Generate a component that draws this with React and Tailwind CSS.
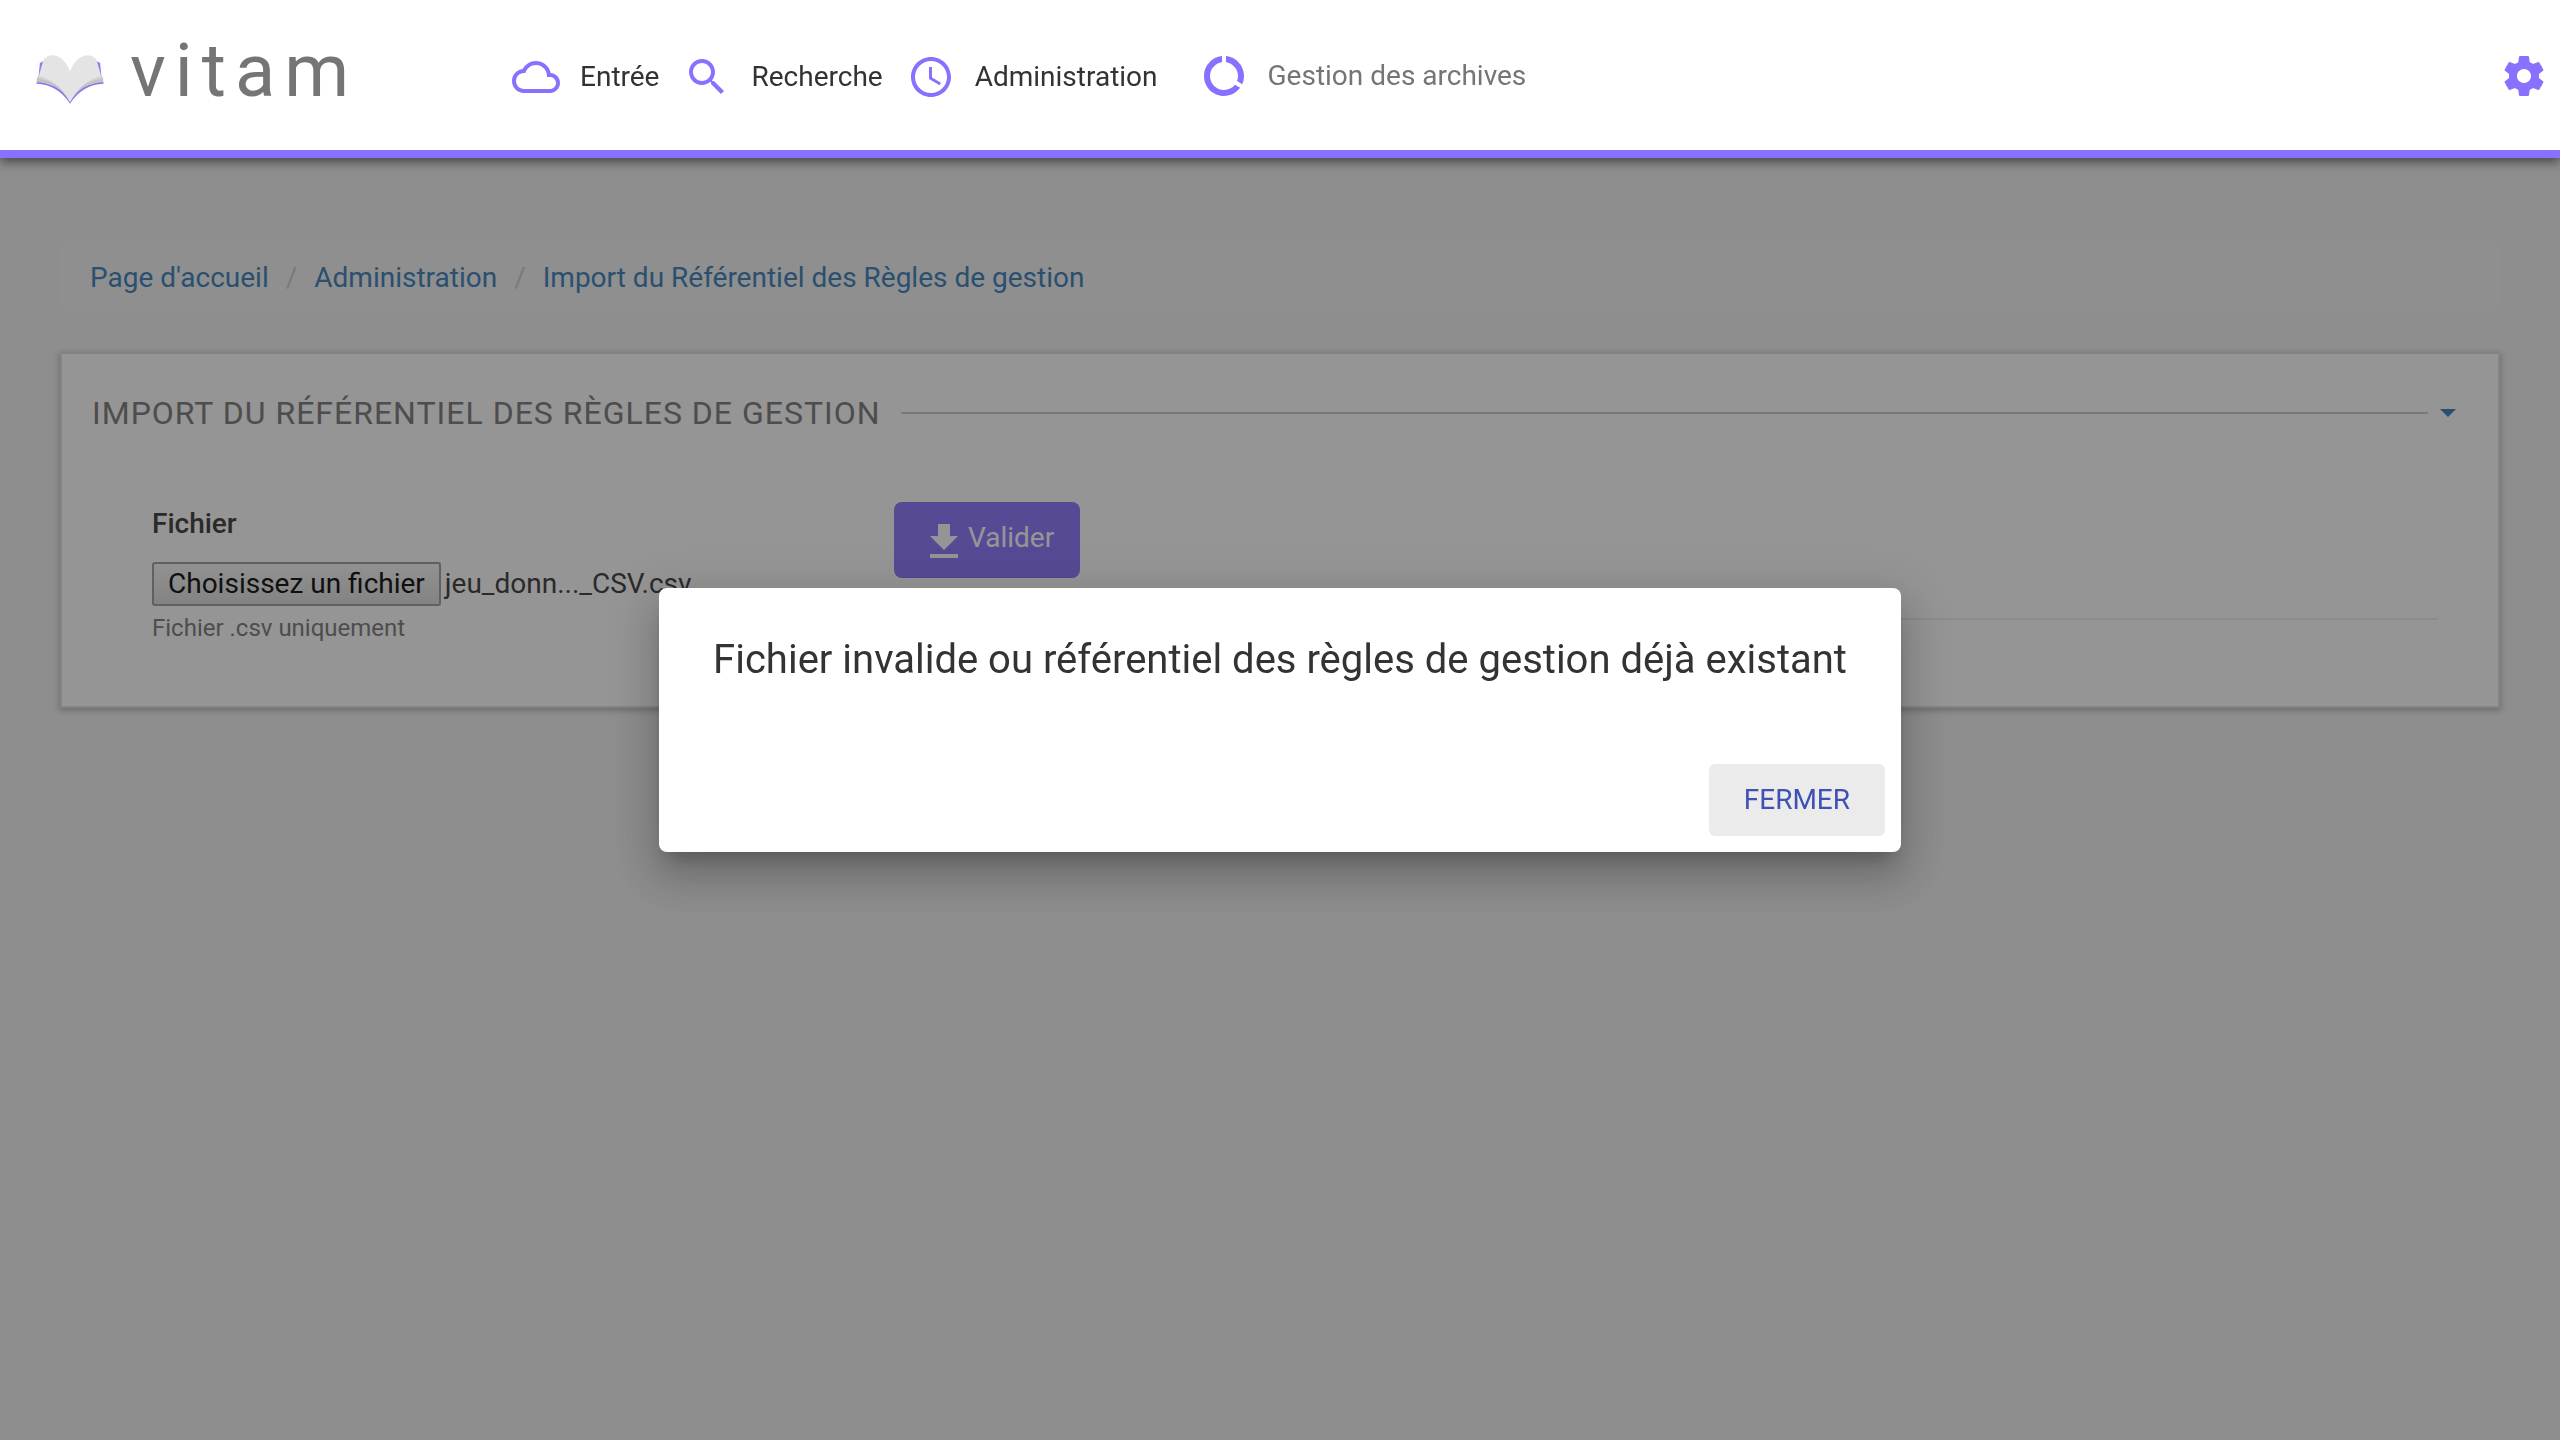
import { useRef } from "react";

function Icon({ d, className }) {
  return (
    <svg viewBox="0 0 24 24" fill="currentColor" aria-hidden="true" className={className}>
      <path d={d} />
    </svg>
  );
}

const CLOUD =
  "M19.35 10.04C18.67 6.59 15.64 4 12 4 9.11 4 6.6 5.64 5.35 8.04 2.34 8.36 0 10.91 0 14c0 3.31 2.69 6 6 6h13c2.76 0 5-2.24 5-5 0-2.64-2.05-4.78-4.65-4.96zM19 18H6c-2.21 0-4-1.79-4-4s1.79-4 4-4h.71C7.37 7.69 9.48 6 12 6c3.04 0 5.5 2.46 5.5 5.5v.5H19c1.66 0 3 1.34 3 3s-1.34 3-3 3z";
const SEARCH =
  "M15.5 14h-.79l-.28-.27C15.41 12.59 16 11.11 16 9.5 16 5.91 13.09 3 9.5 3S3 5.91 3 9.5 5.91 16 9.5 16c1.61 0 3.09-.59 4.23-1.57l.27.28v.79l5 4.99L20.49 19l-4.99-5zm-6 0C7.01 14 5 11.99 5 9.5S7.01 5 9.5 5 14 7.01 14 9.5 11.99 14 9.5 14z";
const CLOCK =
  "M11.99 2C6.47 2 2 6.48 2 12s4.47 10 9.99 10C17.52 22 22 17.52 22 12S17.52 2 11.99 2zM12 20c-4.42 0-8-3.58-8-8s3.58-8 8-8 8 3.58 8 8-3.58 8-8 8zM12.5 7H11v6l5.25 3.15.75-1.23-4.5-2.67z";
const USAGE =
  "M13 2.05v3.03c3.39.49 6 3.39 6 6.92 0 .9-.18 1.75-.48 2.54l2.6 1.53c.56-1.24.88-2.62.88-4.07 0-5.18-3.95-9.45-9-9.95zM12 19c-3.87 0-7-3.13-7-7 0-3.53 2.61-6.43 6-6.92V2.05c-5.06.5-9 4.76-9 9.95 0 5.52 4.47 10 9.99 10 3.31 0 6.24-1.61 8.06-4.09l-2.6-1.53C16.17 17.98 14.21 19 12 19z";
const GEAR =
  "M19.43 12.98c.04-.32.07-.64.07-.98s-.03-.66-.07-.98l2.11-1.65c.19-.15.24-.42.12-.64l-2-3.46c-.12-.22-.39-.3-.61-.22l-2.49 1c-.52-.4-1.08-.73-1.69-.98l-.38-2.65C14.46 2.18 14.25 2 14 2h-4c-.25 0-.46.18-.49.42l-.38 2.65c-.61.25-1.17.59-1.69.98l-2.49-1c-.23-.09-.49 0-.61.22l-2 3.46c-.13.22-.07.49.12.64l2.11 1.65c-.04.32-.07.65-.07.98s.03.66.07.98l-2.11 1.65c-.19.15-.24.42-.12.64l2 3.46c.12.22.39.3.61.22l2.49-1c.52.4 1.08.73 1.69.98l.38 2.65c.03.24.24.42.49.42h4c.25 0 .46-.18.49-.42l.38-2.65c.61-.25 1.17-.59 1.69-.98l2.49 1c.23.09.49 0 .61-.22l2-3.46c.12-.22.07-.49-.12-.64l-2.11-1.65zM12 15.5c-1.93 0-3.5-1.57-3.5-3.5s1.57-3.5 3.5-3.5 3.5 1.57 3.5 3.5-1.57 3.5-3.5 3.5z";
const DOWNLOAD = "M19 9h-4V3H9v6H5l7 7 7-7zM5 18v2h14v-2H5z";

function BookLogo() {
  return (
    <svg viewBox="0 0 204 148" aria-hidden="true" className="h-[49px] w-[68px]">
      <path d="M11 24 22 18 14 66 7 64zM193 24 182 18 190 66 197 64z" fill="#8f7cf0" />
      <path d="M3 76Q0 82 1 87Q65 90 102 147Q139 90 203 87Q204 82 201 76L102 110z" fill="#8a74fa" />
      <path d="M4 66Q0 74 2 82Q68 84 102 141Q136 84 202 82Q204 74 200 66L102 90z" fill="#c2c2c2" />
      <path d="M6 62Q4 66 4 70Q72 82 102 136Q132 82 200 70Q200 66 198 62L102 84z" fill="#d3d3d3" />
      <path
        d="M8 63Q16 34 22 14Q34 0 52 1Q86 6 102 50Q118 6 152 1Q170 0 182 14Q188 34 196 63Q146 78 120 114Q110 128 102 143Q94 128 84 114Q58 78 8 63z"
        fill="#e4e4e4"
      />
    </svg>
  );
}

const NAV = [
  { label: "Entrée", icon: CLOUD },
  { label: "Recherche", icon: SEARCH },
  { label: "Administration", icon: CLOCK },
];

const CRUMBS = ["Page d'accueil", "Administration", "Import du Référentiel des Règles de gestion"];

function Header() {
  return (
    <header className="relative z-20 flex h-[158px] items-center border-b-8 border-[#8970ff] bg-white shadow-[0_4px_10px_rgba(0,0,0,0.5)]">
      <a href="#accueil" className="flex w-1/5 items-center gap-[26px] pl-9">
        <span className="pt-2">
          <BookLogo />
        </span>
        <span className="pb-2 text-[74px] leading-[88px] tracking-[9px] text-[#757575]">vitam</span>
      </a>
      <nav className="flex items-center gap-6 pt-1">
        {NAV.map((item) => (
          <a key={item.label} href="#menu" className="flex items-center gap-5">
            <Icon d={item.icon} className="size-12 text-[#8970ff]" />
            {item.label}
          </a>
        ))}
        <a href="#archives" className="ml-[18px] flex items-center gap-5 pb-[2px] text-[#757575]">
          <Icon d={USAGE} className="size-12 text-[#8970ff]" />
          Gestion des archives
        </a>
      </nav>
      <button type="button" aria-label="Paramètres" className="mr-3 ml-auto pt-[2px] text-[#8970ff]">
        <Icon d={GEAR} className="size-12" />
      </button>
    </header>
  );
}

function Breadcrumb() {
  return (
    <nav aria-label="Fil d'Ariane" className="rounded-lg bg-[#f3f3f3] px-[30px] pt-[18px] pb-[14px]">
      <ol className="flex">
        {CRUMBS.map((crumb, i) => (
          <li key={crumb} className="flex">
            {i > 0 && <span className="px-[17px] text-[#ccc]">/</span>}
            <a href="#fil" className="text-[#337ab7]">
              {crumb}
            </a>
          </li>
        ))}
      </ol>
    </nav>
  );
}

function ImportCard() {
  const fileRef = useRef(null);
  return (
    <section className="mt-10 border-2 border-[#dcdcdc] bg-white px-[30px] pt-9 pb-[60px] shadow-[0_2px_6px_1px_rgba(0,0,0,0.25)]">
      <div className="flex items-center">
        <h1 className="text-[32px] leading-[46px] tracking-[1px] text-[#757575]">
          IMPORT DU RÉFÉRENTIEL DES RÈGLES DE GESTION
        </h1>
        <span className="ml-5 h-[2px] flex-1 bg-[#ccc]" />
        <button type="button" aria-label="Replier" className="mr-3 ml-3 text-[#337ab7]">
          <svg viewBox="0 0 16 8" fill="currentColor" aria-hidden="true" className="h-2 w-4">
            <path d="M0 0h16L8 8z" />
          </svg>
        </button>
      </div>
      <form className="mx-[30px] mt-[66px] grid grid-cols-3" onSubmit={(e) => e.preventDefault()}>
        <div className="pl-[30px]">
          <label htmlFor="fichier" className="block pt-[2px] font-medium">
            Fichier
          </label>
          <div className="mt-[18px] flex items-center gap-1">
            <input ref={fileRef} id="fichier" type="file" accept=".csv" tabIndex={-1} className="sr-only" />
            <button
              type="button"
              onClick={() => fileRef.current.click()}
              className="h-11 rounded-[3px] border-2 border-[#9a9a9a] bg-linear-to-b from-[#f8f8f8] to-[#dddddd] px-[14px] leading-10 whitespace-nowrap text-black"
            >
              Choisissez un fichier
            </button>
            <span className="whitespace-nowrap">jeu_donn..._CSV.csv</span>
          </div>
          <p className="mt-1 text-2xl leading-9 text-[#757575]">Fichier .csv uniquement</p>
        </div>
        <div className="col-span-2">
          <button
            type="submit"
            className="flex h-[76px] items-start rounded-lg bg-[#8970ff] pt-4 pr-[26px] pl-[26px] text-white"
          >
            <Icon d={DOWNLOAD} className="size-12" />
            <span className="leading-10">Valider</span>
          </button>
          <hr className="mt-10 border-t-2 border-[#eee]" />
        </div>
      </form>
    </section>
  );
}

function ErrorDialog() {
  return (
    <div className="fixed inset-0 z-10 flex items-center justify-center bg-[rgba(33,33,33,0.48)]">
      <div
        role="alertdialog"
        aria-labelledby="dialog-title"
        className="min-w-[1242px] rounded-lg bg-white shadow-[0_14px_16px_-8px_rgba(0,0,0,0.2),0_26px_38px_4px_rgba(0,0,0,0.14),0_10px_48px_8px_rgba(0,0,0,0.12)]"
      >
        <h2 id="dialog-title" className="px-12 pt-12 text-center text-[40px] leading-12">
          Fichier invalide ou référentiel des règles de gestion déjà existant
        </h2>
        <div className="flex justify-end px-4 pt-20 pb-4">
          <button type="button" className="h-[72px] rounded-md bg-[#ebebeb] px-[35px] text-[#3f51b5]">
            FERMER
          </button>
        </div>
      </div>
    </div>
  );
}

export default function App() {
  return (
    <div className="min-h-screen bg-[#f1f1f1] font-['Roboto',sans-serif] text-[28px] leading-10 text-[#333]">
      <Header />
      <main className="px-[60px] pt-[82px]">
        <Breadcrumb />
        <ImportCard />
      </main>
      <ErrorDialog />
    </div>
  );
}
